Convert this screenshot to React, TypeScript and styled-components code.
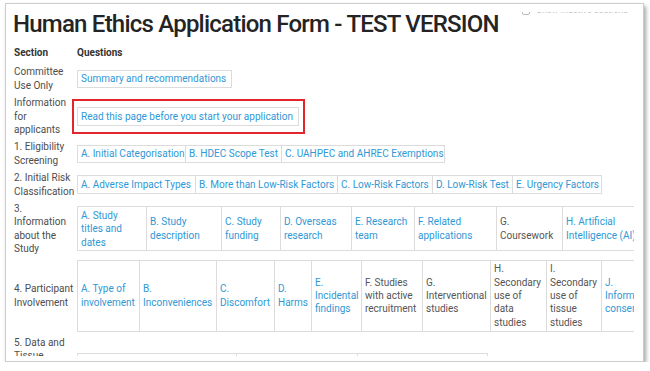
import React from "react";
import styled, { createGlobalStyle, css } from "styled-components";

const Global = createGlobalStyle`
  html, body { margin: 0; padding: 0; background: #fff; }
  body { font-family: Roboto, "Liberation Sans", Arial, sans-serif; }
  * { box-sizing: border-box; }
`;

const Frame = styled.div`
  margin: 3px 0 0 5px;
  width: 639px;
  height: 359px;
  border: 1px solid #cdcdcd;
  box-shadow: 2px 3px 4px rgba(0, 0, 0, 0.35);
  background: #fff;
  padding: 5px 9px 5px 8px;
  display: flex;
  flex-direction: column;
`;

const Viewport = styled.div`
  flex: 1;
  min-height: 0;
  overflow: hidden;
`;

const Header = styled.header`
  display: flex;
  align-items: flex-start;
  margin-bottom: 7px;
`;

const Title = styled.h1`
  margin: 0 0 0 -1px;
  font-size: 24px;
  line-height: 30px;
  font-weight: 500;
  letter-spacing: -0.78px;
  color: #242424;
  white-space: nowrap;
`;

const InactiveToggle = styled.label`
  margin: 3px 6px 0 auto;
  height: 3px;
  overflow: hidden;
  display: flex;
  align-items: flex-end;
  gap: 6px;
  color: #c2c2c2;
  font-size: 9px;
  line-height: 9px;
  white-space: nowrap;
`;

const ToggleBox = styled.span`
  width: 8px;
  height: 8px;
  border: 1px solid #bbb;
  border-radius: 2px;
`;

const Sections = styled.div`
  display: grid;
  grid-template-columns: 63px minmax(0, 1fr);
  row-gap: 4px;
  align-items: center;
  font-size: 10px;
  line-height: 13.4px;
`;

const ColHead = styled.div`
  font-weight: 700;
  color: #333;
  margin-bottom: 2px;
`;

const SectionLabel = styled.div`
  color: #4d4d4d;
`;

const Line = styled.span`
  display: block;
  white-space: nowrap;
`;

const LinkBox = styled.a<{ $w: number; $highlight?: boolean }>`
  position: relative;
  justify-self: start;
  display: block;
  width: ${(p) => p.$w}px;
  padding: 1.5px 3px;
  border: 1px solid #dcdcdc;
  color: #2f98d5;
  text-decoration: none;
  white-space: nowrap;
  ${(p) =>
    p.$highlight &&
    css`
      &::after {
        content: "";
        position: absolute;
        left: -6px;
        right: -7px;
        top: -9px;
        bottom: -9px;
        border: 2px solid #e3262b;
      }
    `}
`;

const Track = styled.div`
  display: flex;
  min-width: 0;
  overflow: hidden;
`;

const Cell = styled.div<{ $w: number; $muted?: boolean }>`
  flex: none;
  width: ${(p) => p.$w}px;
  display: flex;
  flex-direction: column;
  justify-content: center;
  padding: 1.5px 3px;
  border: 1px solid #dcdcdc;
  color: ${(p) => (p.$muted ? "#555" : "#2f98d5")};
  text-decoration: none;
  & + & {
    margin-left: -1px;
  }
`;

type Q = { lines: string[]; w: number; muted?: boolean };

const q = (w: number, lines: string[], muted = false): Q => ({ w, lines, muted });

const eligibility: Q[] = [
  q(109, ["A. Initial Categorisation"]),
  q(97, ["B. HDEC Scope Test"]),
  q(164, ["C. UAHPEC and AHREC Exemptions"]),
];

const risk: Q[] = [
  q(119, ["A. Adverse Impact Types"]),
  q(143, ["B. More than Low-Risk Factors"]),
  q(96, ["C. Low-Risk Factors"]),
  q(81, ["D. Low-Risk Test"]),
  q(90, ["E. Urgency Factors"]),
];

const study: Q[] = [
  q(70, ["A. Study", "titles and", "dates"]),
  q(76, ["B. Study", "description"]),
  q(60, ["C. Study", "funding"]),
  q(72, ["D. Overseas", "research"]),
  q(64, ["E. Research", "team"]),
  q(83, ["F. Related", "applications"]),
  q(67, ["G.", "Coursework"], true),
  q(82, ["H. Artificial", "Intelligence (AI)"]),
];

const participant: Q[] = [
  q(63, ["A. Type of", "involvement"]),
  q(78, ["B.", "Inconveniences"]),
  q(59, ["C.", "Discomfort"]),
  q(38, ["D.", "Harms"]),
  q(51, ["E.", "Incidental", "findings"]),
  q(62, ["F. Studies", "with active", "recruitment"], true),
  q(69, ["G.", "Interventional", "studies"], true),
  q(57, ["H.", "Secondary", "use of", "data", "studies"], true),
  q(56, ["I.", "Secondary", "use of", "tissue", "studies"], true),
  q(64, ["J.", "Informed", "consent"]),
];

const dataTissue: Q[] = [
  q(160, ["A. Personal and health information"]),
  q(122, ["B. Data management plan"]),
  q(131, ["C. Tissue management plan"]),
];

const Lines = ({ lines }: { lines: string[] }) => (
  <>
    {lines.map((l) => (
      <Line key={l}>{l}</Line>
    ))}
  </>
);

const QuestionTrack = ({ items }: { items: Q[] }) => (
  <Track>
    {items.map((it) => (
      <Cell
        key={it.lines.join(" ")}
        as={it.muted ? "div" : "a"}
        href={it.muted ? undefined : "#"}
        $w={it.w}
        $muted={it.muted}
      >
        <Lines lines={it.lines} />
      </Cell>
    ))}
  </Track>
);

export default function App() {
  return (
    <>
      <Global />
      <Frame>
        <Viewport>
          <Header>
            <Title>Human Ethics Application Form - TEST VERSION</Title>
            <InactiveToggle>
              <ToggleBox />
              <span>Show inactive sections</span>
            </InactiveToggle>
          </Header>
          <Sections>
            <ColHead>Section</ColHead>
            <ColHead>Questions</ColHead>

            <SectionLabel>
              <Lines lines={["Committee", "Use Only"]} />
            </SectionLabel>
            <LinkBox href="#" $w={155}>
              Summary and recommendations
            </LinkBox>

            <SectionLabel>
              <Lines lines={["Information", "for", "applicants"]} />
            </SectionLabel>
            <LinkBox href="#" $w={222} $highlight>
              Read this page before you start your application
            </LinkBox>

            <SectionLabel>
              <Lines lines={["1. Eligibility", "Screening"]} />
            </SectionLabel>
            <QuestionTrack items={eligibility} />

            <SectionLabel>
              <Lines lines={["2. Initial Risk", "Classification"]} />
            </SectionLabel>
            <QuestionTrack items={risk} />

            <SectionLabel>
              <Lines lines={["3.", "Information", "about the", "Study"]} />
            </SectionLabel>
            <QuestionTrack items={study} />

            <SectionLabel>
              <Lines lines={["4. Participant", "Involvement"]} />
            </SectionLabel>
            <QuestionTrack items={participant} />

            <SectionLabel>
              <Lines lines={["5. Data and", "Tissue", "Management", "Plans"]} />
            </SectionLabel>
            <QuestionTrack items={dataTissue} />
          </Sections>
        </Viewport>
      </Frame>
    </>
  );
}
